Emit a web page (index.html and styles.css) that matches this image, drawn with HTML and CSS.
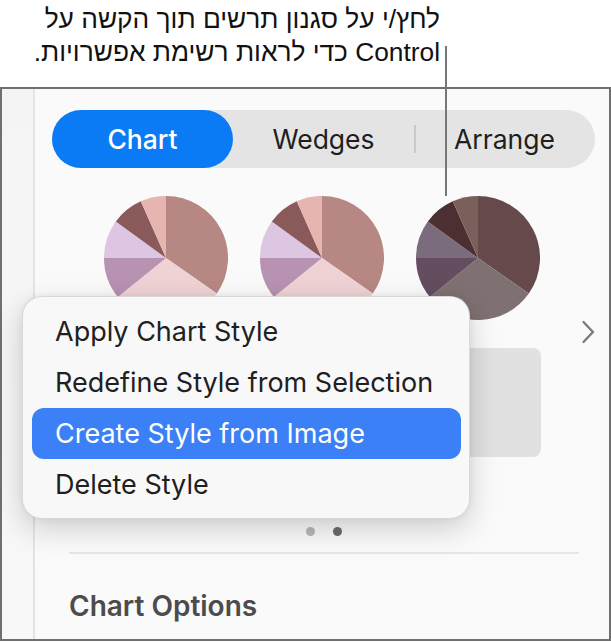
FILE: index.html
```html
<!DOCTYPE html>
<html lang="en">
<head>
<meta charset="utf-8">
<title>Chart styles</title>
<link rel="stylesheet" href="styles.css">
</head>
<body>
<div class="callout" dir="rtl" lang="he">לחץ/י על סגנון תרשים תוך הקשה על<br>Control כדי לראות רשימת אפשרויות.</div>
<div class="callout-line"></div>

<div class="panel">
  <div class="strip"></div>
  <div class="main">
    <div class="segmented">
      <div class="seg seg-active">Chart</div>
      <div class="seg">Wedges</div>
      <div class="seg seg-divided">Arrange</div>
    </div>

    <div class="styles">
      <div class="grid">
        <svg class="pie" viewBox="0 0 124 124" width="124" height="124">
          <path fill="#b78784" d="M62,62 L62,0 A62,62 0 0 1 112.79,97.56 Z"/>
          <path fill="#efd3d4" d="M62,62 L112.79,97.56 A62,62 0 0 1 13.82,101.02 Z"/>
          <path fill="#b892b1" d="M62,62 L13.82,101.02 A62,62 0 0 1 0,62 Z"/>
          <path fill="#ddc6e2" d="M62,62 L0,62 A62,62 0 0 1 11.84,25.56 Z"/>
          <path fill="#8a5a5b" d="M62,62 L11.84,25.56 A62,62 0 0 1 36.78,5.36 Z"/>
          <path fill="#e7b5b0" d="M62,62 L36.78,5.36 A62,62 0 0 1 62,0 Z"/>
        </svg>
        <svg class="pie" viewBox="0 0 124 124" width="124" height="124">
          <path fill="#b78784" d="M62,62 L62,0 A62,62 0 0 1 112.79,97.56 Z"/>
          <path fill="#efd3d4" d="M62,62 L112.79,97.56 A62,62 0 0 1 13.82,101.02 Z"/>
          <path fill="#b892b1" d="M62,62 L13.82,101.02 A62,62 0 0 1 0,62 Z"/>
          <path fill="#ddc6e2" d="M62,62 L0,62 A62,62 0 0 1 11.84,25.56 Z"/>
          <path fill="#8a5a5b" d="M62,62 L11.84,25.56 A62,62 0 0 1 36.78,5.36 Z"/>
          <path fill="#e7b5b0" d="M62,62 L36.78,5.36 A62,62 0 0 1 62,0 Z"/>
        </svg>
        <svg class="pie" viewBox="0 0 124 124" width="124" height="124">
          <path fill="#664a4b" d="M62,62 L62,0 A62,62 0 0 1 112.79,97.56 Z"/>
          <path fill="#7f7171" d="M62,62 L112.79,97.56 A62,62 0 0 1 13.82,101.02 Z"/>
          <path fill="#634d5f" d="M62,62 L13.82,101.02 A62,62 0 0 1 0,62 Z"/>
          <path fill="#7a6b7d" d="M62,62 L0,62 A62,62 0 0 1 11.84,25.56 Z"/>
          <path fill="#4b2f31" d="M62,62 L11.84,25.56 A62,62 0 0 1 36.78,5.36 Z"/>
          <path fill="#7b5f5a" d="M62,62 L36.78,5.36 A62,62 0 0 1 62,0 Z"/>
        </svg>
        <div class="thumb"></div>
        <div class="thumb"></div>
        <div class="thumb"></div>
      </div>
      <div class="next">
        <svg width="14" height="24" viewBox="0 0 14 24"><path d="M2.5 2 L12 12 L2.5 22" fill="none" stroke="#7b7b7b" stroke-width="2.4" stroke-linecap="round" stroke-linejoin="round"/></svg>
      </div>
    </div>

    <div class="dots"><span class="dot"></span><span class="dot dot-on"></span></div>
    <div class="sep"></div>
    <div class="section-title">Chart Options</div>
  </div>

  <div class="menu">
    <div class="item">Apply Chart Style</div>
    <div class="item">Redefine Style from Selection</div>
    <div class="item item-hl">Create Style from Image</div>
    <div class="item">Delete Style</div>
  </div>
</div>
</body>
</html>
```

FILE: styles.css
```css
html, body {
  margin: 0;
  padding: 0;
  background: #ffffff;
}
body {
  width: 611px;
  height: 643px;
  position: relative;
  overflow: hidden;
  font-family: Inter, "Open Sans", sans-serif;
}
.callout {
  height: 87px;
  box-sizing: border-box;
  padding: 3px 171px 0 0;
  font-family: "Liberation Sans", Arial, sans-serif;
  font-size: 26.3px;
  line-height: 33px;
  color: #111111;
  text-align: right;
}
.callout-line {
  position: absolute;
  left: 445px;
  top: 46px;
  width: 2px;
  height: 150px;
  background: #777777;
  z-index: 5;
}
.panel {
  position: relative;
  height: 554px;
  box-sizing: border-box;
  border: 2px solid #707070;
  display: flex;
  background: #fafafa;
}
.strip {
  width: 31px;
  flex: none;
  background: linear-gradient(180deg, #f4f4f4, #f8f8f8);
  border-right: 2px solid #e4e4e4;
}
.main {
  flex: 1;
  display: flex;
  flex-direction: column;
  padding: 21px 15px 0 17px;
}
.segmented {
  height: 58px;
  border-radius: 29px;
  background: #e4e4e4;
  display: flex;
  align-items: center;
}
.seg {
  flex: 1;
  height: 58px;
  display: flex;
  align-items: center;
  justify-content: center;
  font-size: 26.5px;
  color: #1e1e1e;
  position: relative;
}
.seg-active {
  background: #0a7af5;
  color: #ffffff;
  border-radius: 29px;
  font-weight: 500;
}
.seg-divided::before {
  content: "";
  position: absolute;
  left: 0;
  top: 15px;
  bottom: 15px;
  width: 2px;
  background: #cacaca;
}
.styles {
  margin-top: 28px;
  display: flex;
  align-items: flex-start;
}
.grid {
  margin-left: 52px;
  display: grid;
  grid-template-columns: 124px 124px 124px;
  grid-template-rows: 124px 109px;
  column-gap: 32px;
  row-gap: 28px;
}
.pie {
  display: block;
}
.thumb {
  background: #e1e1e1;
  border-radius: 8px;
  width: 125px;
}
.next {
  margin-left: 41px;
  margin-top: 124px;
  display: flex;
}
.next svg {
  display: block;
}
.dots {
  margin-top: 70px;
  display: flex;
  justify-content: center;
  gap: 18px;
}
.dot {
  width: 9px;
  height: 9px;
  border-radius: 50%;
  background: #b8b8b8;
}
.dot-on {
  background: #6b6b6b;
}
.sep {
  margin: 16px 16px 0 17px;
  height: 2px;
  background: #e6e6e6;
}
.section-title {
  margin: 37px 0 0 17px;
  font-size: 28px;
  font-weight: 600;
  color: #4c4c4c;
  line-height: 30px;
}
.menu {
  position: absolute;
  left: 20px;
  top: 207px;
  width: 448px;
  box-sizing: border-box;
  padding: 9px 8px 8px 9px;
  background: #f8f8f8;
  border: 1px solid rgba(0, 0, 0, 0.12);
  border-radius: 20px;
  box-shadow: 0 10px 30px rgba(0, 0, 0, 0.18), 0 0 6px rgba(0, 0, 0, 0.06);
  z-index: 3;
}
.item {
  height: 51px;
  display: flex;
  align-items: center;
  padding-left: 23px;
  font-size: 27px;
  color: #202020;
  border-radius: 12px;
}
.item-hl {
  background: #3b80f6;
  color: #ffffff;
}
```
